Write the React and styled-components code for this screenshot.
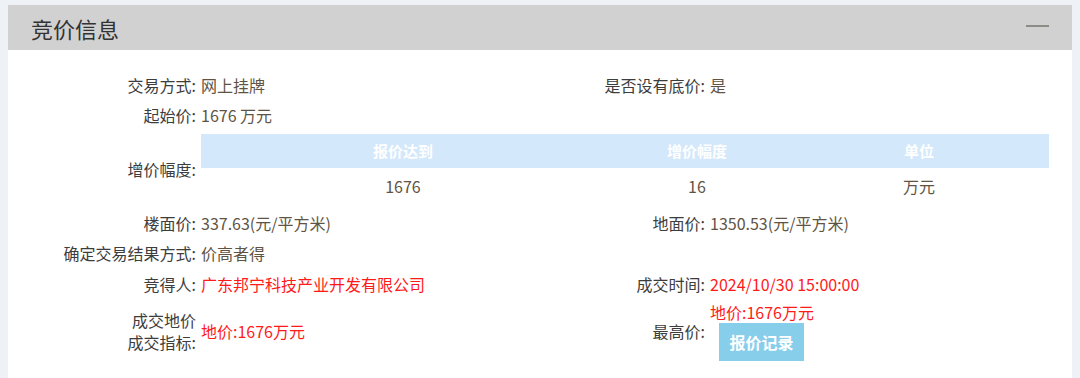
import React from "react";
import styled, { createGlobalStyle } from "styled-components";

const GlobalStyle = createGlobalStyle`
  body {
    margin: 0;
    background: #eef2f6;
    font-family: "Noto Sans CJK SC", "Noto Sans", sans-serif;
  }
`;

const bidTable = {
  head: ["报价达到", "增价幅度", "单位"],
  row: ["1676", "16", "万元"],
};

const App = () => {
  return (
    <>
      <GlobalStyle />
      <Panel>
        <Header>
          <Title>竞价信息</Title>
          <Collapse />
        </Header>
        <Body>
          <Grid>
            <Label>交易方式:</Label>
            <Value>网上挂牌</Value>
            <Label>是否设有底价:</Label>
            <Value>是</Value>

            <Label>起始价:</Label>
            <Value>1676 万元</Value>
            <Label />
            <Value />

            <Label>增价幅度:</Label>
            <TableCell>
              <Inner>
                {bidTable.head.map((h) => (
                  <Th key={h}>{h}</Th>
                ))}
                {bidTable.row.map((d, i) => (
                  <Td key={i}>{d}</Td>
                ))}
              </Inner>
            </TableCell>

            <Label>楼面价:</Label>
            <Value>337.63(元/平方米)</Value>
            <Label>地面价:</Label>
            <Value>1350.53(元/平方米)</Value>

            <Label>确定交易结果方式:</Label>
            <Value>价高者得</Value>
            <Label />
            <Value />

            <Label $pad="5px 5px 4px 0">竞得人:</Label>
            <Value $pad="5px 0 4px" $red>
              广东邦宁科技产业开发有限公司
            </Value>
            <Label $pad="5px 5px 4px 0">成交时间:</Label>
            <Value $pad="5px 0 4px" $red>
              2024/10/30 15:00:00
            </Value>

            <Label $pad="2px 5px 2px 0">
              成交地价
              <br />
              成交指标:
            </Label>
            <Value $pad="2px 0" $red>
              地价:1676万元
            </Value>
            <Label $pad="2px 5px 2px 0">最高价:</Label>
            <Value $pad="2px 0" $stack>
              <RedLine>地价:1676万元</RedLine>
              <RecordButton>报价记录</RecordButton>
            </Value>
          </Grid>
        </Body>
      </Panel>
    </>
  );
};

export default App;

const Panel = styled.div`
  margin: 5px 8px 0;
  background: #fff;
  min-height: 373px;
`;

const Header = styled.div`
  height: 45px;
  background: #d1d1d1;
  display: flex;
  align-items: center;
  justify-content: space-between;
  padding: 0 23px;
`;

const Title = styled.h2`
  margin: 0;
  font-size: 22px;
  font-weight: normal;
  color: #333;
`;

const Collapse = styled.span`
  width: 23px;
  height: 2px;
  background: #8c8c86;
  margin-bottom: 4px;
`;

const Body = styled.div`
  padding: 20px 23px 0 0;
`;

const Grid = styled.div`
  display: grid;
  grid-template-columns: 193px 390px 119px 339px;
  font-size: 16px;
  line-height: 22px;
`;

const Label = styled.div`
  display: flex;
  align-items: center;
  justify-content: flex-end;
  text-align: right;
  white-space: nowrap;
  padding: ${(p) => p.$pad || "4px 5px 4px 0"};
  color: #3d3d3d;
`;

const Value = styled.div`
  display: flex;
  flex-direction: ${(p) => (p.$stack ? "column" : "row")};
  align-items: ${(p) => (p.$stack ? "flex-start" : "center")};
  white-space: nowrap;
  padding: ${(p) => p.$pad || "4px 0"};
  color: ${(p) => (p.$red ? "#ff1a1a" : "#5f5444")};
`;

const TableCell = styled.div`
  grid-column: 2 / span 3;
  padding: 4px 0;
`;

const Inner = styled.div`
  display: grid;
  grid-template-columns: 404px 184px 260px;
`;

const Th = styled.div`
  height: 34px;
  display: flex;
  align-items: center;
  justify-content: center;
  background: #d3e8fb;
  color: #fff;
  font-size: 15px;
  font-weight: bold;
`;

const Td = styled.div`
  height: 36px;
  display: flex;
  align-items: center;
  justify-content: center;
  color: #5f5444;
`;

const RedLine = styled.span`
  color: #ff1a1a;
`;

const RecordButton = styled.button`
  margin-left: 9px;
  width: 85px;
  height: 38px;
  border: none;
  background: #87ceeb;
  color: #fff;
  font-family: inherit;
  font-size: 16px;
  font-weight: bold;
  padding: 0;
  cursor: pointer;
`;
